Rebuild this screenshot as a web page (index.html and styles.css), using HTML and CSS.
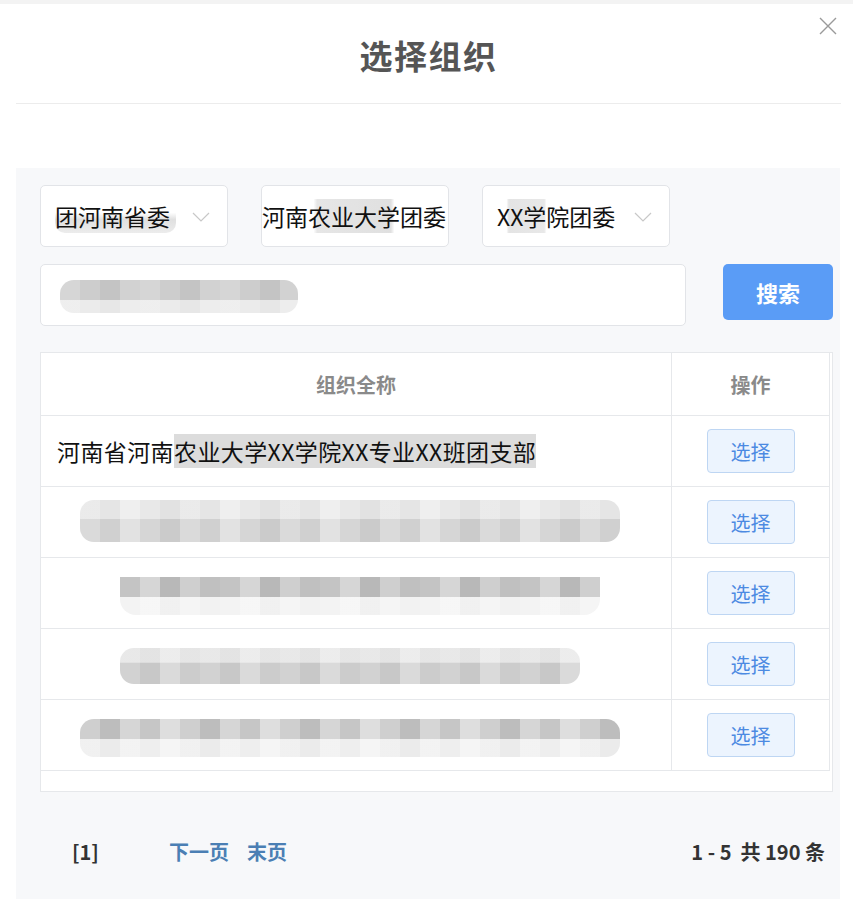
FILE: index.html
```html
<!DOCTYPE html>
<html lang="zh-CN">
<head>
<meta charset="utf-8">
<title>选择组织</title>
<link rel="stylesheet" href="styles.css">
</head>
<body>
<div class="dialog">
  <div class="close">
    <svg width="18" height="18" viewBox="0 0 18 18"><path d="M1 1 L17 17 M17 1 L1 17" stroke="#9a9a9a" stroke-width="1.4" fill="none"/></svg>
  </div>
  <div class="header"><h1 class="title">选择组织</h1></div>
  <div class="spacer"></div>
  <div class="panel">
    <div class="selects">
      <div class="select"><span class="sel-text smudge-a">团河南省委</span><svg class="chev" width="18" height="10" viewBox="0 0 18 10"><path d="M1 1 L9 9 L17 1" stroke="#c8c8c8" stroke-width="1.2" fill="none"/></svg></div>
      <div class="select select-wide"><span class="sel-text smudge-b">河南农业大学团委</span></div>
      <div class="select"><span class="sel-text smudge-c">XX学院团委</span><svg class="chev" width="18" height="10" viewBox="0 0 18 10"><path d="M1 1 L9 9 L17 1" stroke="#c8c8c8" stroke-width="1.2" fill="none"/></svg></div>
    </div>
    <div class="search-row">
      <div class="input"><div class="blur blur-input"></div></div>
      <button class="btn-search">搜索</button>
    </div>
    <div class="table-wrap">
      <div class="trow thead">
        <div class="c-name">组织全称</div>
        <div class="c-op">操作</div>
      </div>
      <div class="trow">
        <div class="c-name c-left">河南省河南<span class="hl">农业大学XX学院XX专业XX班团支部</span></div>
        <div class="c-op"><button class="btn-pick">选择</button></div>
      </div>
      <div class="trow">
        <div class="c-name c-left"><div class="blur blur-r2"></div></div>
        <div class="c-op"><button class="btn-pick">选择</button></div>
      </div>
      <div class="trow">
        <div class="c-name c-left"><div class="blur blur-r3"></div></div>
        <div class="c-op"><button class="btn-pick">选择</button></div>
      </div>
      <div class="trow">
        <div class="c-name c-left"><div class="blur blur-r4"></div></div>
        <div class="c-op"><button class="btn-pick">选择</button></div>
      </div>
      <div class="trow">
        <div class="c-name c-left"><div class="blur blur-r5"></div></div>
        <div class="c-op"><button class="btn-pick">选择</button></div>
      </div>
    </div>
    <div class="pager">
      <span class="pg-cur">[1]</span>
      <a class="pg-link pg-next">下一页</a>
      <a class="pg-link">末页</a>
      <span class="pg-total">1 - 5 &nbsp;共 190 条</span>
    </div>
  </div>
</div>
</body>
</html>
```

FILE: styles.css
```css
* { box-sizing: border-box; }
html, body { margin: 0; padding: 0; }
body {
  background: #f3f3f3;
  padding-top: 4px;
  font-family: "Noto Sans CJK SC", "Noto Sans", sans-serif;
  color: #111;
}
.dialog {
  background: #fff;
  min-height: 895px;
  position: relative;
  display: flex;
  flex-direction: column;
}
.close {
  position: absolute;
  top: 12px;
  left: 819px;
  width: 18px;
  height: 18px;
}
.header {
  margin: 0 12px 0 16px;
  height: 100px;
  border-bottom: 1px solid #ececec;
  display: flex;
  align-items: center;
  justify-content: center;
}
.title {
  margin: 4px 0 0 0;
  font-size: 33px;
  font-weight: 700;
  color: #555;
  line-height: 1;
  letter-spacing: 1.5px;
}
.spacer { height: 64px; }
.panel {
  flex: 1;
  margin: 0 13px 0 16px;
  background: #f7f8fa;
  padding: 17px 7px 0 24px;
}
.selects {
  display: flex;
  gap: 33px;
}
.select {
  width: 188px;
  height: 62px;
  background: #fff;
  border: 1px solid #e2e4e8;
  border-radius: 5px;
  display: flex;
  align-items: center;
  padding-left: 14px;
  padding-right: 17px;
  justify-content: space-between;
  overflow: hidden;
}
.select-wide { padding-left: 0; padding-right: 0; }
.sel-text {
  font-size: 23px;
  color: #111;
  white-space: nowrap;
}
.smudge-a { background: linear-gradient(180deg, #fff 0, #fff 40%, #e0e0e0 60%, #ececec 100%); border-radius: 10px; padding-right: 6px; }
.smudge-b { background: linear-gradient(90deg, #fff 0, #fff 28%, #e6e6e6 30%, #e0e0e0 70%, #fff 72%); }
.smudge-c { background: linear-gradient(90deg, #fff 0, #fff 8%, #e4e4e4 10%, #e8e8e8 40%, #fff 42%); }
.chev { flex-shrink: 0; margin-top: 2px; }
.search-row {
  display: flex;
  align-items: flex-start;
  margin-top: 17px;
  gap: 37px;
}
.input {
  width: 646px;
  height: 62px;
  background: #fff;
  border: 1px solid #e2e4e8;
  border-radius: 5px;
  padding: 15px 0 0 19px;
}
.btn-search {
  width: 110px;
  height: 56px;
  border: none;
  border-radius: 5px;
  background: #5a9cf6;
  color: #fff;
  font-family: inherit;
  font-size: 22px;
  font-weight: 700;
  padding: 0;
}
.blur { border-radius: 14px; }
.blur-input {
  width: 238px;
  height: 33px;
  background:
    linear-gradient(180deg, rgba(255,255,255,0) 0, rgba(255,255,255,0) 60%, rgba(255,255,255,0.6) 61%, rgba(255,255,255,0.6) 100%),
    repeating-linear-gradient(90deg, #d6d6d6 0 20px, #cdcdcd 20px 40px, #c4c4c4 40px 60px, #d2d2d2 60px 80px);
}
.table-wrap {
  margin-top: 26px;
  width: 793px;
  height: 440px;
  background: #fff;
  border: 1px solid #e6e8eb;
}
.trow {
  display: flex;
  height: 71px;
  border-bottom: 1px solid #e6e8eb;
  width: 789px;
}
.thead { height: 63px; }
.c-name {
  width: 631px;
  border-right: 1px solid #e6e8eb;
  display: flex;
  align-items: center;
  justify-content: center;
  font-size: 20px;
  font-weight: 700;
  color: #8a8a8a;
}
.c-op {
  flex: 1;
  border-right: 1px solid #e6e8eb;
  display: flex;
  align-items: center;
  justify-content: center;
  font-size: 20px;
  font-weight: 700;
  color: #8a8a8a;
}
.c-left {
  justify-content: flex-start;
  padding-left: 16px;
  font-weight: 400;
  color: #111;
  font-size: 23px;
  letter-spacing: 0.4px;
  white-space: nowrap;
}
.hl { background: #dcdcdc; }
.btn-pick {
  width: 88px;
  height: 44px;
  background: #ecf4fe;
  border: 1px solid #bed6f3;
  border-radius: 4px;
  color: #4c8ae2;
  font-family: inherit;
  font-size: 20px;
  padding: 0;
}
.blur-r2 {
  margin-left: 23px;
  width: 540px;
  height: 42px;
  margin-top: -2px;
  background:
    linear-gradient(180deg, rgba(255,255,255,0.45) 0, rgba(255,255,255,0.45) 45%, rgba(255,255,255,0) 46%),
    repeating-linear-gradient(90deg, #dadada 0 20px, #d0d0d0 20px 40px, #e2e2e2 40px 60px, #d6d6d6 60px 80px, #cbcbcb 80px 100px);
}
.blur-r3 {
  margin-left: 63px;
  width: 480px;
  height: 38px;
  margin-top: 6px;
  border-radius: 0 0 16px 16px;
  background:
    linear-gradient(180deg, rgba(255,255,255,0) 0, rgba(255,255,255,0) 52%, rgba(255,255,255,0.8) 53%),
    repeating-linear-gradient(90deg, #c4c4c4 0 20px, #d6d6d6 20px 40px, #b8b8b8 40px 60px, #cfcfcf 60px 80px, #c0c0c0 80px 100px);
}
.blur-r4 {
  margin-left: 63px;
  width: 460px;
  height: 36px;
  margin-top: 4px;
  background:
    linear-gradient(180deg, rgba(255,255,255,0.5) 0, rgba(255,255,255,0.5) 40%, rgba(255,255,255,0) 41%),
    repeating-linear-gradient(90deg, #d2d2d2 0 20px, #c8c8c8 20px 40px, #dadada 40px 60px, #cccccc 60px 80px);
}
.blur-r5 {
  margin-left: 23px;
  width: 540px;
  height: 38px;
  margin-top: 6px;
  background:
    linear-gradient(180deg, rgba(255,255,255,0) 0, rgba(255,255,255,0) 52%, rgba(255,255,255,0.7) 53%),
    repeating-linear-gradient(90deg, #cfcfcf 0 20px, #bdbdbd 20px 40px, #d6d6d6 40px 60px, #c6c6c6 60px 80px, #dedede 80px 100px);
}
.pager {
  display: flex;
  align-items: center;
  height: 118px;
  padding-left: 32px;
  padding-right: 8px;
  font-size: 20px;
  font-weight: 700;
  color: #333;
}
.pg-cur { width: 97px; }
.pg-link { color: #4b7fb4; margin-right: 18px; }
.pg-total { margin-left: auto; word-spacing: 0; letter-spacing: 0; }
```
